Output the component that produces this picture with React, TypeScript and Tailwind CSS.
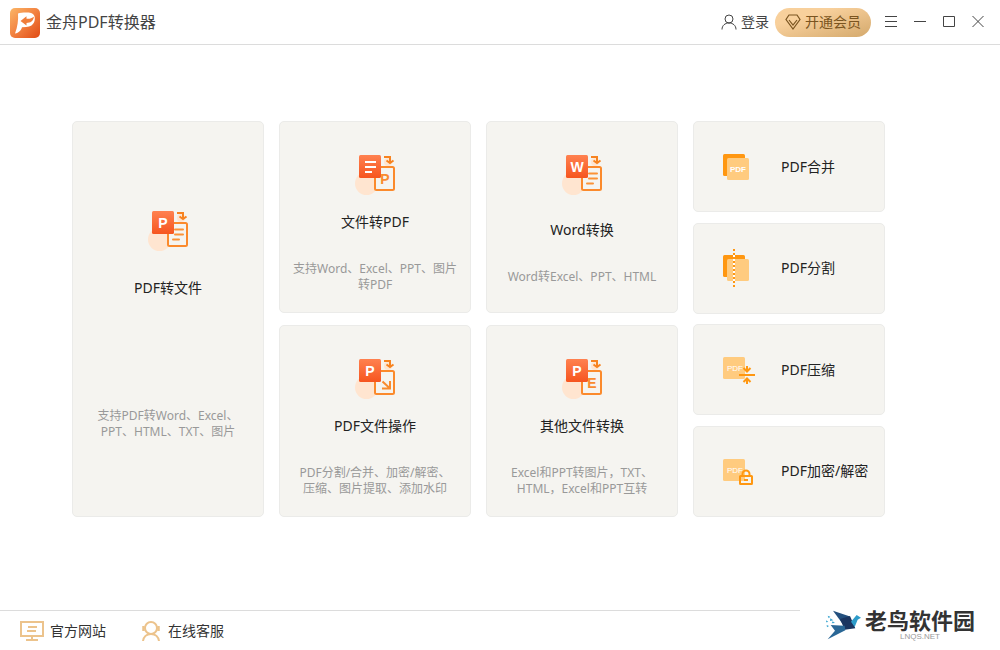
import type { ReactNode } from "react";

type BigCard = {
  title: string;
  lines: string[];
  mark: ReactNode;
  sheet: ReactNode;
};

type Tool = { title: string; icon: ReactNode };

const markText = (letter: string) => (
  <text
    x="15"
    y="18"
    textAnchor="middle"
    fontSize="14"
    fontWeight="700"
    fill="#fff"
    fontFamily="Liberation Sans, sans-serif"
  >
    {letter}
  </text>
);

const sheetText = (letter: string) => (
  <text
    x="30"
    y="30"
    textAnchor="middle"
    fontSize="14"
    fontWeight="700"
    fill="#f98b2f"
    fontFamily="Liberation Sans, sans-serif"
  >
    {letter}
  </text>
);

const sheetLines = (
  <path
    d="M27 19.5h8M27 24.5h8M25 29.5h6"
    stroke="#fb9236"
    strokeWidth="2"
    strokeLinecap="round"
  />
);

// Two stacked sheets with a turning arrow, shared by all large cards
function ConvertIcon({ mark, sheet }: { mark: ReactNode; sheet: ReactNode }) {
  return (
    <svg className="h-[42px] w-10 shrink-0" viewBox="0 0 40 42" fill="none" aria-hidden="true">
      <defs>
        <linearGradient id="sheetFill" x1="0" y1="0" x2="0" y2="1">
          <stop offset="0" stopColor="#ff8150" />
          <stop offset="1" stopColor="#f6551f" />
        </linearGradient>
      </defs>
      <circle cx="11.5" cy="29.5" r="11.5" fill="#ffe5d0" />
      <circle cx="33" cy="8" r="4" fill="#ffe5d0" />
      <rect x="20" y="13" width="19" height="23" rx="1.5" fill="#f5f4f0" stroke="#fb8a2c" strokeWidth="2" />
      {sheet}
      <rect x="4" y="1" width="22" height="23" rx="1.5" fill="url(#sheetFill)" />
      {mark}
      <path d="M29 3h6v6" stroke="#f78320" strokeWidth="2" />
      <path d="M31.5 6.500L35 9l3.500-2.500" stroke="#f78320" strokeWidth="2" />
    </svg>
  );
}

function ToolIcon({ children }: { children: ReactNode }) {
  return (
    <svg className="h-[41px] w-8 shrink-0" viewBox="0 0 32 41" fill="none" aria-hidden="true">
      {children}
    </svg>
  );
}

const pdfTag = (x: number, y: number, weight: number) => (
  <text x={x} y={y} textAnchor="middle" fontSize="8" fontWeight={weight} fill="#fff" fontFamily="Liberation Sans, sans-serif">
    PDF
  </text>
);

const toFile: BigCard = {
  title: "PDF转文件",
  lines: ["支持PDF转Word、Excel、", "PPT、HTML、TXT、图片"],
  mark: markText("P"),
  sheet: sheetLines,
};

const columns: BigCard[][] = [
  [
    {
      title: "文件转PDF",
      lines: ["支持Word、Excel、PPT、图片", "转PDF"],
      mark: (
        <path d="M10 8h11M10 13h11M10 18h7" stroke="#fff" strokeWidth="2" />
      ),
      sheet: sheetText("P"),
    },
    {
      title: "PDF文件操作",
      lines: ["PDF分割/合并、加密/解密、", "压缩、图片提取、添加水印"],
      mark: markText("P"),
      sheet: (
        <path d="M27.500 23.500l7 6.500M35 23v7.500h-8" stroke="#f98b2f" strokeWidth="2" />
      ),
    },
  ],
  [
    {
      title: "Word转换",
      lines: ["Word转Excel、PPT、HTML"],
      mark: markText("W"),
      sheet: sheetLines,
    },
    {
      title: "其他文件转换",
      lines: ["Excel和PPT转图片，TXT、", "HTML，Excel和PPT互转"],
      mark: markText("P"),
      sheet: sheetText("E"),
    },
  ],
];

const tools: Tool[] = [
  {
    title: "PDF合并",
    icon: (
      <ToolIcon>
        <rect y="8" width="22" height="22" rx="1.5" fill="#ff9711" />
        <rect x="4" y="12" width="22" height="22" rx="1.5" fill="#ffcb7f" />
        {pdfTag(15, 26, 700)}
      </ToolIcon>
    ),
  },
  {
    title: "PDF分割",
    icon: (
      <ToolIcon>
        <rect y="7" width="22" height="22" rx="1.5" fill="#ff9711" />
        <rect x="4" y="11" width="22" height="22" rx="1.5" fill="#ffcb7f" />
        <path d="M11 1v40" stroke="#ff9711" strokeWidth="2" strokeDasharray="2 2" />
        <path d="M11 7v26" stroke="#fff" strokeWidth="2" strokeDasharray="2 2" />
      </ToolIcon>
    ),
  },
  {
    title: "PDF压缩",
    icon: (
      <ToolIcon>
        <rect y="8" width="22" height="22" rx="1.5" fill="#ffcb7f" />
        {pdfTag(12, 22, 400)}
        <path
          d="M16 26h16M24 17v5M20.500 19l3.500 3.500 3.500-3.500M24 35v-5M20.500 33l3.500-3.500 3.500 3.500"
          stroke="#ff9711"
          strokeWidth="2"
        />
      </ToolIcon>
    ),
  },
  {
    title: "PDF加密/解密",
    icon: (
      <ToolIcon>
        <rect y="8" width="22" height="22" rx="1.5" fill="#ffcb7f" />
        {pdfTag(12, 22, 400)}
        <rect x="17" y="25" width="12" height="8" rx="0.500" stroke="#ff9711" strokeWidth="2" />
        <path d="M19.500 25v-2a3.500 3.500 0 0 1 7 0v2M21 29h4" stroke="#ff9711" strokeWidth="2" />
      </ToolIcon>
    ),
  },
];

// Title bar buttons, each drawn on a 16px grid
const windowButtons = [
  { label: "菜单", d: "M2 2.500h12M2 7.500h12M2 12.500h12" },
  { label: "最小化", d: "M2 7.500h12" },
  { label: "最大化", d: "M2.500 2.500h11v10h-11z" },
  { label: "关闭", d: "M2.500 2l11 11M13.500 2l-11 11" },
];

const cardBase =
  "flex rounded-[5px] border border-[#ebebe9] bg-[#f5f4f0] hover:border-[#f3c48e]";

function ConvertCard({ card, tall = false }: { card: BigCard; tall?: boolean }) {
  return (
    <button
      type="button"
      className={`${cardBase} flex-col items-center ${
        tall ? "min-h-[396px] pt-22" : "h-48 pt-8"
      }`}
    >
      <ConvertIcon mark={card.mark} sheet={card.sheet} />
      <span
        className={`flex flex-col items-center ${
          tall ? "gap-[110px] pt-[26px]" : "flex-1 justify-center gap-[29px] pb-1"
        }`}
      >
        <span className="text-sm leading-5 text-[#222]">{card.title}</span>
        <span className="text-xs leading-4 text-[#999]">
          {card.lines.map((line) => (
            <span key={line} className="block whitespace-nowrap">
              {line}
            </span>
          ))}
        </span>
      </span>
    </button>
  );
}

function Header() {
  return (
    <header className="flex h-[45px] items-center border-b border-[#dcdcdc] pr-3.5 pl-2.5 text-[#444]">
      <svg className="mt-0.5 size-[30px]" viewBox="0 0 30 30" aria-hidden="true">
        <defs>
          <linearGradient id="logoFill" x1="0" y1="0" x2="1" y2="1">
            <stop offset="0" stopColor="#fbb667" />
            <stop offset="0.5" stopColor="#f28140" />
            <stop offset="1" stopColor="#e04a14" />
          </linearGradient>
        </defs>
        <rect width="30" height="30" rx="5" fill="url(#logoFill)" />
        <path
          d="M8 5.500C11 4.500 18 4.300 21 5c3.500 1 4.500 4.500 3.500 8-1.200 4-4 5.700-8.500 6l-4 .3C11 22.500 9 25 5 25.500 7.500 19 8.500 12 8 5.500z"
          fill="#fff"
        />
        <path
          d="M10.500 13l6-4.800v2.600c3 .3 5.500-.5 7.500-2-.8 4.500-3.500 6.200-7.500 6.200v2.600z"
          fill="#f07d3a"
        />
      </svg>
      <h1 className="ml-1.5 text-base">金舟PDF转换器</h1>

      <button type="button" className="ml-auto flex items-center gap-1 text-sm">
        <svg className="size-4" viewBox="0 0 16 16" fill="none" stroke="currentColor" aria-hidden="true">
          <circle cx="8" cy="5" r="4" />
          <path d="M1 15.500c0-4 3-6.500 7-6.500s7 2.500 7 6.500" />
        </svg>
        登录
      </button>
      <button
        type="button"
        className="ml-1.5 flex h-[29px] items-center gap-1 rounded-full bg-linear-to-br from-[#f8d09c] from-30% to-[#d4a96c] px-2.5 text-sm text-[#7a5420]"
      >
        <svg className="size-4" viewBox="0 0 16 16" fill="none" stroke="currentColor" strokeWidth="1.2" aria-hidden="true">
          <path d="M4 1h8l3 4.500L8 15 1 5.500z" />
          <path d="M4 6l4 5 4-5" />
        </svg>
        开通会员
      </button>

      <div className="ml-3 flex gap-[13px]">
        {windowButtons.map(({ label, d }) => (
          <button key={label} type="button" aria-label={label}>
            <svg className="size-4" viewBox="0 0 16 16" fill="none" stroke="currentColor" aria-hidden="true">
              <path d={d} />
            </svg>
          </button>
        ))}
      </div>
    </header>
  );
}

function Footer() {
  return (
    <footer className="flex">
      <nav className="flex h-10 flex-1 items-center gap-[34px] border-t border-[#dcdcdc] pl-5 text-sm text-[#333]">
        <a href="#site" className="flex items-center gap-1.5">
          <svg className="h-5 w-6" viewBox="0 0 24 20" fill="none" stroke="#ecc38c" strokeWidth="2" aria-hidden="true">
            <path d="M1 1h22v14H1zM8 6h9M7 10h9M12 15v4M6 19h12" />
          </svg>
          官方网站
        </a>
        <a href="#service" className="flex items-center gap-1.5">
          <svg className="h-5 w-[22px]" viewBox="0 0 22 20" fill="none" stroke="#ecc38c" strokeWidth="2" aria-hidden="true">
            <circle cx="11" cy="7" r="6" />
            <path d="M3 20c.5-4 3.500-7 8-7s7.500 3 8 7" />
            <path d="M3.500 5v5M18.500 5v5" strokeWidth="2.500" />
          </svg>
          在线客服
        </a>
      </nav>
      <a href="#lnqs" className="flex w-[200px] items-start gap-[3px] pl-[25px]">
        <svg className="h-[31px] w-[37px]" viewBox="105 45 111 93" aria-hidden="true">
          <path d="M129 47l49 17 8 20-24 8z" fill="#24507e" />
          <path d="M150 72l30-9 16 37-32 4z" fill="#1b3560" />
          <path d="M122 90l42 2 2 14-53 27 22-26z" fill="#2a6796" />
          <path d="M183 80l17-20 13 8-10 6-9 22z" fill="#2d9bc9" />
          <path d="M113 62l8 3-5 5zM109 76l6 5-7 1zM121 70l9 6-10 2zM110 90l7 3-6 4zM128 79l7 5-10 1z" fill="#3aa5d0" />
        </svg>
        <span className="flex flex-col items-center gap-[3px] text-[#333]">
          <span className="text-[22px] leading-5 font-bold">老鸟软件园</span>
          <span className="font-['Liberation_Sans',sans-serif] text-[8px] leading-2 text-[#999]">
            LNQS.NET
          </span>
        </span>
      </a>
    </footer>
  );
}

export default function App() {
  return (
    <div className="flex min-h-screen flex-col bg-white font-['Noto_Sans','Noto_Sans_CJK_SC',sans-serif]">
      <Header />

      <main className="flex-1 pt-[76px] pr-[115px] pb-10 pl-[72px]">
        <div className="grid grid-cols-4 gap-[15px]">
          <ConvertCard card={toFile} tall />
          {columns.map((cards, i) => (
            <div key={i} className="flex flex-col justify-between">
              {cards.map((card) => (
                <ConvertCard key={card.title} card={card} />
              ))}
            </div>
          ))}
          <div className="flex flex-col justify-between">
            {tools.map((tool) => (
              <button
                key={tool.title}
                type="button"
                className={`${cardBase} h-[91px] items-center gap-[26px] pl-[29px] text-sm text-[#222]`}
              >
                {tool.icon}
                <span className="whitespace-nowrap">{tool.title}</span>
              </button>
            ))}
          </div>
        </div>
      </main>

      <Footer />
    </div>
  );
}
